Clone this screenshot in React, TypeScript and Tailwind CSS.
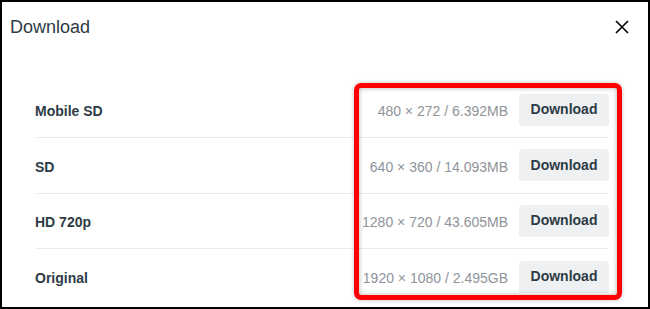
import React from "react"

const rows = [
  { label: "Mobile SD", size: "480 × 272 / 6.392MB" },
  { label: "SD", size: "640 × 360 / 14.093MB" },
  { label: "HD 720p", size: "1280 × 720 / 43.605MB" },
  { label: "Original", size: "1920 × 1080 / 2.495GB" },
]

export default function App() {
  return (
    <div
      className="relative w-[650px] h-[309px] overflow-hidden border-2 border-black bg-white text-[#2d3b45]"
      style={{ fontFamily: '"Liberation Sans", Arial, sans-serif' }}
    >
      {/* Header */}
      <div className="flex items-start justify-between h-[80.5px] pl-[8px] pr-[19px]">
        <h1 className="mt-[14px] text-[18px] leading-[22px] font-normal">Download</h1>
        <button className="mt-[18px] text-black" aria-label="Close">
          <svg width="14" height="14" viewBox="0 0 14 14">
            <path d="M1 1L13 13M13 1L1 13" stroke="currentColor" strokeWidth="1.6" />
          </svg>
        </button>
      </div>

      {/* Rows */}
      <div className="pl-[33px] pr-[39px]">
        {rows.map((row, index) => (
          <div
            key={index}
            className={`flex items-center h-[55.5px] ${index < rows.length - 1 ? "border-b border-[#ececec]" : ""}`}
          >
            <span className="flex-1 pt-[4px] text-[14px] font-bold">{row.label}</span>
            <span className="mr-[11px] pt-[4px] text-[14px] text-[#8e949a]">{row.size}</span>
            <button className="h-[32px] w-[90px] rounded-[3px] bg-[#eef0f1] text-[14px] font-bold text-[#2d3b45]">
              Download
            </button>
          </div>
        ))}
      </div>

      {/* Annotation highlight */}
      <div className="absolute left-[352px] top-[81px] w-[268px] h-[217px] rounded-[7px] border-[5px] border-[#ff0000] shadow-[inset_0_0_5px_rgba(0,0,0,0.3),0_0_4px_rgba(0,0,0,0.25)]" />
    </div>
  )
}
